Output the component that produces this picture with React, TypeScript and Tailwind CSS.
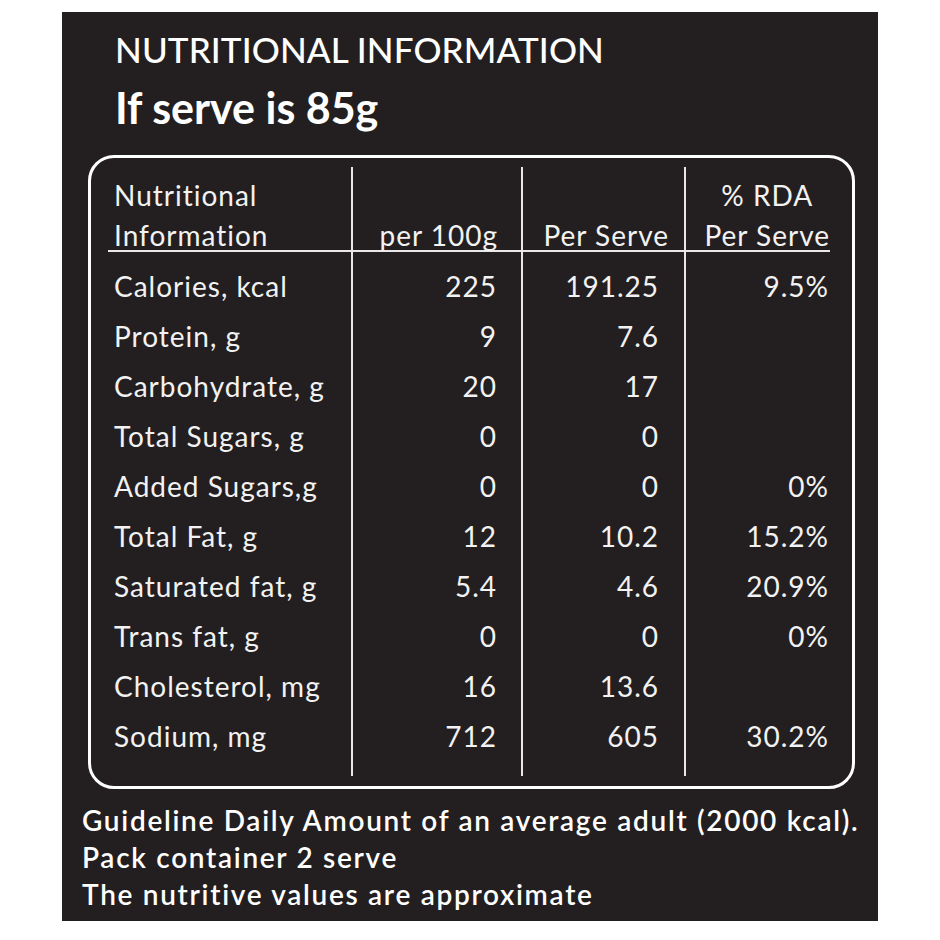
import React from "react";

interface Row {
  name: string;
  per100: string;
  serve: string;
  rda: string;
}

const ROWS: Row[] = [
  { name: "Calories, kcal", per100: "225", serve: "191.25", rda: "9.5%" },
  { name: "Protein, g", per100: "9", serve: "7.6", rda: "" },
  { name: "Carbohydrate, g", per100: "20", serve: "17", rda: "" },
  { name: "Total Sugars, g", per100: "0", serve: "0", rda: "" },
  { name: "Added Sugars,g", per100: "0", serve: "0", rda: "0%" },
  { name: "Total Fat, g", per100: "12", serve: "10.2", rda: "15.2%" },
  { name: "Saturated fat, g", per100: "5.4", serve: "4.6", rda: "20.9%" },
  { name: "Trans fat, g", per100: "0", serve: "0", rda: "0%" },
  { name: "Cholesterol, mg", per100: "16", serve: "13.6", rda: "" },
  { name: "Sodium, mg", per100: "712", serve: "605", rda: "30.2%" },
];

const font = { fontFamily: "Lato, 'Open Sans', sans-serif" };

export default function App() {
  return (
    <div
      className="w-[940px] h-[940px] bg-white pt-[12px] pl-[62px] [font-variant-ligatures:none]"
      style={font}
    >
      <div className="w-[816px] h-[909px] bg-[#231f20] text-white flex flex-col">
        <div className="pl-[53px] pt-[15px]">
          <h1 className="text-[35px] leading-[44px] font-medium tracking-[0.1px]">NUTRITIONAL INFORMATION</h1>
          <h2 className="text-[43px] leading-[50px] font-bold mt-[12px]">If serve is 85g</h2>
        </div>

        <div className="ml-[26px] mt-[22px] w-[767px] h-[634px] border-[3px] border-white rounded-[26px] pt-[9px] pl-[17px]">
          <div className="flex text-[28px] leading-[50px] tracking-[1px] text-[#f2f2f2]">
            {/* name column */}
            <div className="w-[243px] flex flex-col">
              <div className="h-[85px] border-b-2 border-[#e8e8e8] pl-[6px] leading-[40px] pt-[8px]">
                Nutritional
                <br />
                Information
              </div>
              <div className="pt-[9px] pb-[15px] pl-[6px]">
                {ROWS.map((r) => (
                  <div key={r.name}>{r.name}</div>
                ))}
              </div>
            </div>

            {/* per 100g */}
            <div className="w-[170px] flex flex-col border-l-2 border-[#e8e8e8]">
              <div className="h-[85px] border-b-2 border-[#e8e8e8] pr-[23px] text-right leading-[40px] pt-[48px]">
                per 100g
              </div>
              <div className="pt-[9px] pb-[15px] pr-[24px] text-right">
                {ROWS.map((r) => (
                  <div key={r.name}>{r.per100}</div>
                ))}
              </div>
            </div>

            {/* per serve */}
            <div className="w-[163px] flex flex-col border-l-2 border-[#e8e8e8]">
              <div className="h-[85px] border-b-2 border-[#e8e8e8] pr-[15px] text-right leading-[40px] pt-[48px]">
                Per Serve
              </div>
              <div className="pt-[9px] pb-[15px] pr-[25px] text-right">
                {ROWS.map((r) => (
                  <div key={r.name}>{r.serve}</div>
                ))}
              </div>
            </div>

            {/* % RDA */}
            <div className="w-[146px] flex flex-col border-l-2 border-[#e8e8e8]">
              <div className="h-[85px] border-b-2 border-[#e8e8e8] flex justify-end leading-[40px] pt-[8px]">
                <div className="text-center">
                  % RDA
                  <br />
                  Per Serve
                </div>
              </div>
              <div className="pt-[9px] pb-[15px] pr-[1px] text-right">
                {ROWS.map((r) => (
                  <div key={r.name} className="h-[50px]">
                    {r.rda}
                  </div>
                ))}
              </div>
            </div>
          </div>
        </div>

        <div className="pl-[20px] pt-[13px] text-[28px] leading-[37px] font-semibold tracking-[1.7px]">
          <p>Guideline Daily Amount of an average adult (2000 kcal).</p>
          <p>Pack container 2 serve</p>
          <p>The nutritive values are approximate</p>
        </div>
      </div>
    </div>
  );
}
